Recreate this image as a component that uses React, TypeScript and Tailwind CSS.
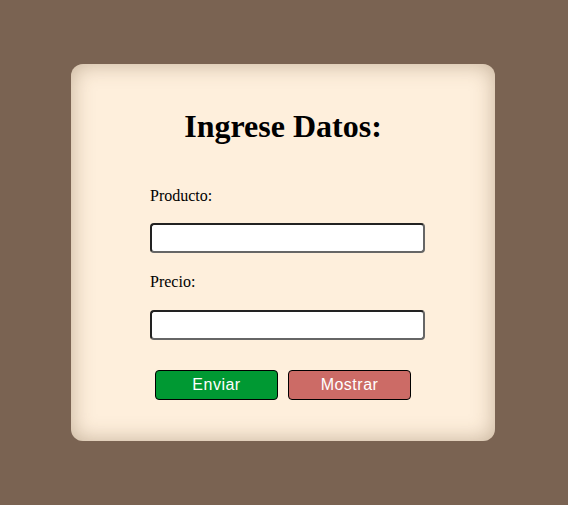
import React, { useState } from 'react';

const App: React.FC = () => {
  const [producto, setProducto] = useState('');
  const [precio, setPrecio] = useState('');

  return (
    <div className="min-h-screen bg-[#7a6352] pt-[64px] pl-[71px]">
      {/* Card */}
      <div
        className="w-[424px] h-[377px] rounded-[12px] bg-[#feefdc] shadow-[inset_0_0_22px_rgba(90,60,30,0.35)] pt-[44px] pl-[79px]"
        style={{ fontFamily: '"Liberation Serif", "Times New Roman", serif' }}
      >
        <h1 className="-ml-[79px] w-[424px] text-center text-[32px] font-bold text-black leading-[37px]">
          Ingrese Datos:
        </h1>

        <div className="w-[275px] mt-[41px]">
          <label className="block text-[16px] leading-[19px] text-black">Producto:</label>
          <input
            type="text"
            value={producto}
            onChange={(e) => setProducto(e.target.value)}
            className="mt-[18px] block w-[275px] h-[30px] bg-white border-2 border-[#222] border-b-[#666] border-r-[#666] rounded-[4px] px-2 outline-none"
          />

          <label className="block mt-[19px] text-[16px] leading-[19px] text-black">Precio:</label>
          <input
            type="text"
            value={precio}
            onChange={(e) => setPrecio(e.target.value)}
            className="mt-[19px] block w-[275px] h-[30px] bg-white border-2 border-[#222] border-b-[#666] border-r-[#666] rounded-[4px] px-2 outline-none"
          />
        </div>

        {/* Buttons */}
        <div
          className="flex gap-[10px] mt-[30px] ml-[5px]"
          style={{ fontFamily: '"Liberation Sans", Arial, sans-serif' }}
        >
          <button className="w-[123px] h-[30px] bg-[#009933] text-white text-[16px] tracking-[0.5px] border border-black rounded-[4px]">
            Enviar
          </button>
          <button className="w-[123px] h-[30px] bg-[#cc6b66] text-white text-[16px] tracking-[0.5px] border border-black rounded-[4px]">
            Mostrar
          </button>
        </div>
      </div>
    </div>
  );
};

export default App;
